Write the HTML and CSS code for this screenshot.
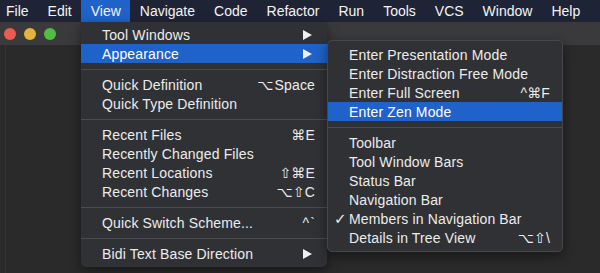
FILE: index.html
```html
<!DOCTYPE html>
<html lang="en">

<head>
    <meta charset="UTF-8">
    <title>View menu</title>
    <link rel="stylesheet" href="styles.css">
</head>

<body>
    <div class="menubar">
        <div class="menubar-item">File</div>
        <div class="menubar-item">Edit</div>
        <div class="menubar-item active">View</div>
        <div class="menubar-item">Navigate</div>
        <div class="menubar-item">Code</div>
        <div class="menubar-item">Refactor</div>
        <div class="menubar-item">Run</div>
        <div class="menubar-item">Tools</div>
        <div class="menubar-item">VCS</div>
        <div class="menubar-item">Window</div>
        <div class="menubar-item">Help</div>
    </div>
    <div class="titlebar">
        <span class="light red"></span>
        <span class="light yellow"></span>
        <span class="light green"></span>
    </div>
    <div class="editor"></div>

    <!-- View 메뉴 -->
    <div class="menu main-menu">
        <div class="row"><span class="label">Tool Windows</span><span class="arrow"></span></div>
        <div class="row selected"><span class="label">Appearance</span><span class="arrow"></span></div>
        <div class="separator"></div>
        <div class="row"><span class="label">Quick Definition</span><span class="key">⌥ Space</span></div>
        <div class="row"><span class="label">Quick Type Definition</span></div>
        <div class="separator"></div>
        <div class="row"><span class="label">Recent Files</span><span class="key">⌘E</span></div>
        <div class="row"><span class="label">Recently Changed Files</span></div>
        <div class="row"><span class="label">Recent Locations</span><span class="key">⇧⌘E</span></div>
        <div class="row"><span class="label">Recent Changes</span><span class="key">⌥⇧C</span></div>
        <div class="separator"></div>
        <div class="row"><span class="label">Quick Switch Scheme...</span><span class="key">^ `</span></div>
        <div class="separator"></div>
        <div class="row"><span class="label">Bidi Text Base Direction</span><span class="arrow"></span></div>
    </div>

    <!-- Appearance 서브메뉴 -->
    <div class="menu sub-menu">
        <div class="row"><span class="label">Enter Presentation Mode</span></div>
        <div class="row"><span class="label">Enter Distraction Free Mode</span></div>
        <div class="row"><span class="label">Enter Full Screen</span><span class="key">^⌘F</span></div>
        <div class="row selected"><span class="label">Enter Zen Mode</span></div>
        <div class="separator"></div>
        <div class="row"><span class="label">Toolbar</span></div>
        <div class="row"><span class="label">Tool Window Bars</span></div>
        <div class="row"><span class="label">Status Bar</span></div>
        <div class="row"><span class="label">Navigation Bar</span></div>
        <div class="row"><span class="check">✓</span><span class="label">Members in Navigation Bar</span></div>
        <div class="row"><span class="label">Details in Tree View</span><span class="key">⌥⇧\</span></div>
    </div>
</body>

</html>
```

FILE: styles.css
```css
body {
    font-family: "Liberation Sans", Arial, "DejaVu Sans", sans-serif;
    font-size: 14px;
    color: #ececec;
    background-color: #2a2a2a;
    margin: 0;
    padding: 0;
    width: 600px;
    height: 273px;
    overflow: hidden;
    position: relative;
}

.menubar {
    height: 22px;
    display: flex;
    align-items: stretch;
    background-color: #1f2336;
}

.menubar-item {
    padding: 0 9.5px;
    display: flex;
    align-items: center;
    color: #f4f4f4;
}

.menubar-item:first-child {
    padding-left: 6px;
}

.menubar-item.active {
    background-color: #1f62c9;
}

.titlebar {
    height: 23px;
    background-color: #3a3a3c;
    display: flex;
    align-items: center;
    gap: 8px;
    padding-left: 4px;
}

.light {
    width: 12px;
    height: 12px;
    border-radius: 50%;
}

.light.red {
    background-color: #ec5a52;
}

.light.yellow {
    background-color: #e3b33c;
}

.light.green {
    background-color: #50bf3f;
}

.editor {
    height: 228px;
    background-color: #2a2a2a;
    border-left: 1px solid #333335;
    margin-left: 5px;
}

.menu {
    position: absolute;
    background-color: #303134;
    box-shadow: 0 4px 12px rgba(0, 0, 0, 0.45);
    padding: 3px 0 4px;
    letter-spacing: 0.15px;
}

.main-menu {
    top: 22px;
    left: 81px;
    width: 246px;
    border-radius: 0 0 5px 5px;
}

.sub-menu {
    top: 40px;
    left: 327px;
    width: 236px;
    padding-top: 4px;
    border-radius: 5px;
    border: 1px solid #45474b;
    box-sizing: border-box;
}

.row {
    height: 19px;
    display: flex;
    align-items: center;
    padding: 0 12px 0 21px;
    position: relative;
}

.row.selected {
    background-color: #1f62c9;
    color: #ffffff;
}

.label {
    flex: 1;
    white-space: nowrap;
}

.key {
    white-space: nowrap;
    word-spacing: -3px;
}

.arrow {
    width: 0;
    height: 0;
    border-top: 5px solid transparent;
    border-bottom: 5px solid transparent;
    border-left: 9px solid #f0f0f0;
    margin-right: 3px;
}

.check {
    position: absolute;
    left: 6px;
    font-family: "DejaVu Sans", sans-serif;
    font-size: 15px;
    font-weight: bold;
}

.separator {
    height: 1px;
    margin: 6px 0 5px;
    background-color: #4a4c50;
}
```
